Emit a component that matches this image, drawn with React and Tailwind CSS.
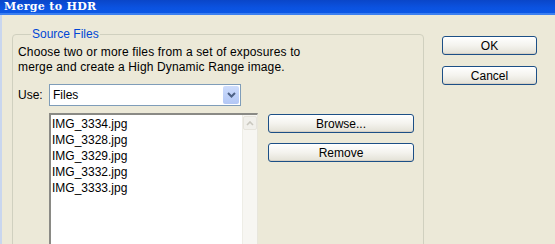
import React from "react";

const font = { fontFamily: '"Liberation Sans", Arial, sans-serif' };

function XPButton({ children, className = "" }) {
  return (
    <button
      className={
        "flex items-center justify-center rounded-[3px] border border-[#1c4f86] bg-gradient-to-b from-[#ffffff] via-[#f4f3ee] to-[#e3e1d6] text-[12px] leading-none text-black shadow-[inset_0_-1px_0_#d6d0c5,inset_0_1px_0_#ffffff] " +
        className
      }
    >
      {children}
    </button>
  );
}

export default function App() {
  const files = [
    "IMG_3334.jpg",
    "IMG_3328.jpg",
    "IMG_3329.jpg",
    "IMG_3332.jpg",
    "IMG_3333.jpg",
  ];
  return (
    <div
      className="w-[555px] h-[244px] overflow-hidden bg-[#ece9d8] flex flex-col"
      style={font}
    >
      {/* title bar */}
      <div className="h-[15px] shrink-0 flex flex-col bg-gradient-to-b from-[#0a46c8] via-[#0b52e0] to-[#0c5ae8]">
        <div className="flex-1 flex items-center pl-[4px] overflow-hidden">
          <span
            className="text-white font-bold text-[11px] leading-[12px]"
            style={{ fontFamily: '"DejaVu Serif", "Liberation Serif", serif', letterSpacing: "0.3px" }}
          >
            Merge to HDR
          </span>
        </div>
        <div className="h-[2px] bg-[#3c7ff0]" />
      </div>

      <div className="flex-1 flex border-l-[2px] border-[#c9d6ee]">
        <div className="flex-1 flex pl-[10px] pt-[12px]">
          {/* group box */}
          <fieldset className="w-[412px] h-[260px] shrink-0 rounded-[4px] border border-[#d0d0bf] px-[5px]">
            <legend className="ml-[13px] px-[1px] text-[12px] leading-[14px] text-[#0046d5]">
              Source Files
            </legend>
            <div className="pt-[4px] text-[12px] leading-[15px] tracking-[0.15px] text-black">
              <div>Choose two or more files from a set of exposures to</div>
              <div>merge and create a High Dynamic Range image.</div>
            </div>
            <div className="mt-[9px] flex items-center">
              <span className="w-[31px] text-[12px] text-black">Use:</span>
              <div className="w-[192px] h-[22px] border border-[#7f9db9] bg-white flex items-center justify-between pl-[3px] pr-[1px]">
                <span className="text-[12px] text-black">Files</span>
                <div className="w-[16px] h-[18px] rounded-[2px] bg-gradient-to-b from-[#cddcfc] to-[#b2c7f5] flex items-center justify-center">
                  <svg width="9" height="6" viewBox="0 0 9 6">
                    <path d="M1 1 L4.5 4.5 L8 1" stroke="#4d6185" strokeWidth="2" fill="none" />
                  </svg>
                </div>
              </div>
            </div>
            <div className="mt-[7px] flex items-start">
              <div className="ml-[31px] w-[209px] h-[140px] shrink-0 border-t-[2px] border-l-[2px] border-r border-[#8a8a85] border-r-[#e8e6dc] bg-white flex">
                <div className="flex-1 pt-[1px] pl-[1px] text-[12px] leading-[16px] text-black">
                  {files.map((f) => (
                    <div key={f}>{f}</div>
                  ))}
                </div>
                <div className="w-[15px] bg-[#f7f6f2] border-l border-[#eeede6] flex flex-col items-center">
                  <div className="w-[14px] h-[14px] mt-[1px] rounded-[2px] bg-[#f1f0eb] border border-[#e6e4dc] flex items-center justify-center">
                    <svg width="8" height="5" viewBox="0 0 8 5">
                      <path d="M1 4 L4 1 L7 4" stroke="#c9c7be" strokeWidth="1.6" fill="none" />
                    </svg>
                  </div>
                </div>
              </div>
              <div className="ml-[10px] flex flex-col gap-[10px] pt-[1px]">
                <XPButton className="w-[146px] h-[19px]">Browse...</XPButton>
                <XPButton className="w-[146px] h-[19px]">Remove</XPButton>
              </div>
            </div>
          </fieldset>
          {/* right buttons */}
          <div className="ml-[18px] pt-[9px] flex flex-col gap-[11px]">
            <XPButton className="w-[95px] h-[19px]">OK</XPButton>
            <XPButton className="w-[95px] h-[19px]">Cancel</XPButton>
          </div>
        </div>
      </div>
    </div>
  );
}
